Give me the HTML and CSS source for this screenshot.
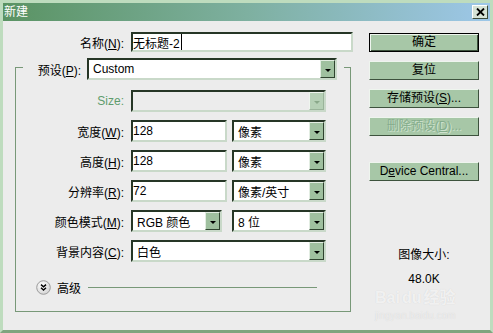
FILE: index.html
```html
<!DOCTYPE html>
<html lang="zh-CN">
<head>
  <meta charset="UTF-8" />
  <title>新建</title>
  <link rel="stylesheet" href="styles.css">
</head>
<body>

  <div class="window">
    <div class="titlebar">
      <span class="title">新建</span>
      <span class="close">
        <svg width="9" height="8" viewBox="0 0 9 8"><path d="M1 0.5 L8 7.5 M8 0.5 L1 7.5" stroke="#000" stroke-width="1.8" /></svg>
      </span>
    </div>

    <div class="content">
      <div class="main">
        <div class="row name-row">
          <span class="label">名称(<u>N</u>):</span>
          <div class="field input name-input">无标题-2<span class="caret"></span></div>
        </div>

        <!-- Preset group -->
        <fieldset class="group">
          <legend>
            <div class="row preset-row">
              <span class="label preset-label">预设(<u>P</u>):</span>
              <div class="field select preset-select"><span class="value">Custom</span><span class="arrow"></span></div>
            </div>
          </legend>

          <div class="row size-row">
            <span class="label size-label">Size:</span>
            <div class="field select disabled size-select"><span class="value"></span><span class="arrow"></span></div>
          </div>

          <div class="row">
            <span class="label">宽度(<u>W</u>):</span>
            <div class="field input num-input">128</div>
            <div class="field select unit-select"><span class="value">像素</span><span class="arrow"></span></div>
          </div>

          <div class="row">
            <span class="label">高度(<u>H</u>):</span>
            <div class="field input num-input">128</div>
            <div class="field select unit-select"><span class="value">像素</span><span class="arrow"></span></div>
          </div>

          <div class="row">
            <span class="label">分辨率(<u>R</u>):</span>
            <div class="field input num-input">72</div>
            <div class="field select unit-select"><span class="value">像素/英寸</span><span class="arrow"></span></div>
          </div>

          <div class="row">
            <span class="label">颜色模式(<u>M</u>):</span>
            <div class="field select mode-select"><span class="value">RGB 颜色</span><span class="arrow"></span></div>
            <div class="field select bits-select"><span class="value">8 位</span><span class="arrow"></span></div>
          </div>

          <div class="row">
            <span class="label">背景内容(<u>C</u>):</span>
            <div class="field select bg-select"><span class="value">白色</span><span class="arrow"></span></div>
          </div>

          <div class="advanced">
            <svg class="adv-icon" width="15" height="15" viewBox="0 0 15 15">
              <defs>
                <radialGradient id="knob" cx="0.4" cy="0.35" r="0.7">
                  <stop offset="0" stop-color="#ffffff" />
                  <stop offset="1" stop-color="#d2d2d2" />
                </radialGradient>
              </defs>
              <circle cx="7.5" cy="7.5" r="6.8" fill="url(#knob)" stroke="#9c9c9c" />
              <path d="M5 4.6 L7.5 6.8 L10 4.6 M5 7.8 L7.5 10 L10 7.8" fill="none" stroke="#000" stroke-width="1.4" />
            </svg>
            <span class="adv-text">高级</span>
            <span class="adv-line"></span>
          </div>
        </fieldset>
      </div>

      <div class="side">
        <div class="btn default">确定</div>
        <div class="btn">复位</div>
        <div class="btn">存储预设(<u>S</u>)...</div>
        <div class="btn off">删除预设(<u>D</u>)...</div>
        <div class="btn device">D<u>e</u>vice Central...</div>
        <div class="info">
          <div>图像大小:</div>
          <div>48.0K</div>
        </div>
      </div>
    </div>

    <div class="watermark">
      <div class="mark-logo">Bai<span class="paw">du</span>经验</div>
      <div class="mark-url">jingyan.baidu.com</div>
    </div>
  </div>

</body>
</html>
```

FILE: styles.css
```css
:root {
  --face: #ececec;
  --sage: #a7c7a7;
  --sage-arrow: #9fc09f;
  --hi: #eef5ee;
  --shade: #3d523d;
  --line: #789878;
  --sunk-dark: #263626;
  --sunk-light: #c9d9c9;
}

* {
  box-sizing: border-box;
}

body {
  margin: 0;
  font-family: "Liberation Sans", "Noto Sans CJK SC", sans-serif;
  font-size: 12px;
  color: #000;
  background: var(--face);
}

u {
  text-decoration: underline;
  text-underline-offset: 1px;
}

.window {
  position: relative;
  width: 493px;
  height: 333px;
  border: 3px solid #bedcbe;
  border-bottom-color: #7fa47f;
  background: var(--face);
  overflow: hidden;
}

/* Title bar */
.titlebar {
  height: 18px;
  display: flex;
  align-items: center;
  justify-content: space-between;
  padding: 0 2px 0 1px;
  background: linear-gradient(to right, #5a9363, #7eb0a0 50%, #9dc7e8);
  color: #fff;
}

.title {
  line-height: 18px;
}

.close {
  width: 16px;
  height: 14px;
  display: flex;
  align-items: center;
  justify-content: center;
  background: #d6e3d6;
  border: 1px solid;
  border-color: #fff #3c4c3c #3c4c3c #fff;
}

/* Body */
.content {
  display: flex;
}

.main {
  width: 366px;
  padding-top: 11px;
}

.row {
  display: flex;
  align-items: center;
}

.label {
  width: 101px;
  margin-right: 7px;
  text-align: right;
  white-space: nowrap;
}

.name-row .label {
  width: 121px;
}

.field {
  height: 22px;
  display: flex;
  align-items: center;
  border: 2px solid;
  border-color: var(--sunk-dark) var(--sunk-light) var(--sunk-light) var(--sunk-dark);
  background: #fff;
  white-space: nowrap;
}

.name-input {
  width: 222px;
  height: 20px;
}

.caret {
  width: 1px;
  height: 16px;
  margin-left: 1px;
  background: #000;
}

.group {
  width: 336px;
  margin: 2px 0 0 12px;
  padding: 0 0 0 7px;
  border: 1px solid var(--line);
}

.group legend {
  padding: 4px 7px 0 0;
  margin: 0;
}

.preset-label {
  width: 58px;
  margin-right: 6px;
}

.preset-select {
  width: 250px;
}

.select .value {
  flex: 1;
  padding-left: 4px;
}

.arrow {
  width: 15px;
  align-self: stretch;
  display: flex;
  align-items: center;
  justify-content: center;
  padding-top: 2px;
  background: var(--sage-arrow);
  border: 1px solid;
  border-color: #e2ede2 #2f432f #2f432f #e2ede2;
}

.arrow::after {
  content: "";
  border-left: 3px solid transparent;
  border-right: 3px solid transparent;
  border-top: 3px solid #000;
}

.row + .row {
  margin-top: 8px;
}

.size-row {
  margin-top: 10px;
}

.size-label {
  color: #5f9c6d;
}

.disabled {
  background: var(--face);
}

.disabled .arrow {
  background: #b6d0b6;
  border-color: #eef5ee #9ab49a #9ab49a #eef5ee;
}

.disabled .arrow::after {
  border-top-color: #8aa88a;
}

.size-select,
.bg-select {
  width: 195px;
}

.num-input {
  width: 96px;
}

.unit-select {
  width: 94px;
  margin-left: 5px;
}

.mode-select {
  width: 91px;
}

.bits-select {
  width: 94px;
  margin-left: 10px;
}

.advanced {
  display: flex;
  align-items: center;
  height: 15px;
  margin: 18px 33px 16px 13px;
}

.adv-text {
  margin-left: 6px;
}

.adv-line {
  flex: 1;
  height: 1px;
  margin-left: 7px;
  background: var(--line);
}

/* Buttons column */
.side {
  width: 110px;
  padding-top: 12px;
  display: flex;
  flex-direction: column;
}

.btn {
  height: 19px;
  margin-bottom: 9px;
  line-height: 17px;
  text-align: center;
  background: var(--sage);
  border: 1px solid;
  border-color: var(--hi) var(--shade) var(--shade) var(--hi);
}

.btn.default {
  border-color: #000;
  box-shadow: inset 1px 1px var(--hi), inset -1px -1px var(--shade);
}

.btn.off {
  color: #84ad8c;
  text-shadow: 1px 1px #cfe2cf;
}

.btn.device {
  margin-top: 17px;
}

.info {
  margin-top: 53px;
  line-height: 24px;
  text-align: center;
}

/* Watermark overlay */
.watermark {
  position: absolute;
  left: 372px;
  top: 286px;
  color: rgba(255, 255, 255, 0.7);
  text-shadow: 0 0 1px rgba(0, 0, 0, 0.12);
  pointer-events: none;
}

.mark-logo {
  font-size: 16px;
  font-weight: bold;
  line-height: 18px;
}

.paw {
  margin: 0 2px;
}

.mark-url {
  font-size: 10px;
  line-height: 12px;
  margin-top: 3px;
  color: rgba(255, 255, 255, 0.5);
}
```
